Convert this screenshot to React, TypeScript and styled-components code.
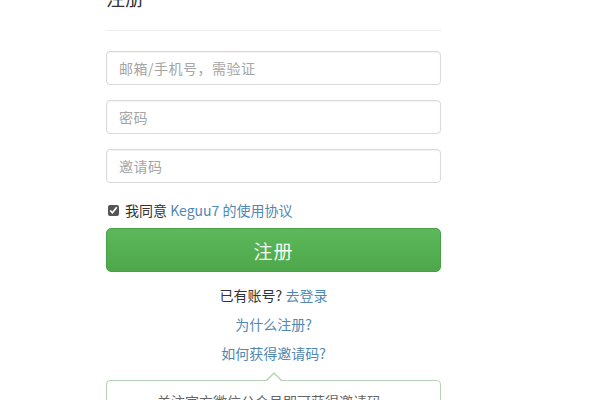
import React from 'react';
import styled, { createGlobalStyle } from 'styled-components';

const GlobalStyle = createGlobalStyle`
  html, body {
    margin: 0;
    padding: 0;
    background: #fff;
    overflow: hidden;
  }
  body {
    font-family: "Noto Sans CJK SC", "Liberation Sans", sans-serif;
    color: #333;
  }
`;

const Page = styled.div`
  width: 335px;
  height: 400px;
  padding-left: 106px;
  overflow: hidden;
`;

const Header = styled.div`
  padding-bottom: 20px;
  border-bottom: 1px solid #eee;
`;

const Title = styled.h2`
  margin: -14px 0 0;
  font-size: 19px;
  line-height: 24px;
  font-weight: normal;
  color: #333;
`;

const Form = styled.form`
  display: flex;
  flex-direction: column;
  margin-top: 20px;
`;

const Input = styled.input`
  box-sizing: border-box;
  height: 34px;
  margin-bottom: 15px;
  padding: 0 12px;
  border: 1px solid #d9d9d9;
  border-radius: 4px;
  box-shadow: inset 0 1px 1px rgba(0, 0, 0, 0.05);
  font-family: inherit;
  font-size: 14px;
  letter-spacing: 0.5px;
  color: #333;
  outline: none;
  &::placeholder {
    color: #a5a5a5;
  }
`;

const Agree = styled.label`
  display: flex;
  align-items: center;
  gap: 6px;
  height: 20px;
  margin-top: 2px;
  font-size: 14px;
  color: #333;
`;

const Check = styled.input`
  width: 11px;
  height: 11px;
  margin: 0 0 0 2px;
  accent-color: #555;
`;

const Link = styled.a`
  color: #4f88b2;
  text-decoration: none;
`;

const SubmitButton = styled.button`
  height: 44px;
  margin-top: 8px;
  border: 1px solid #48a046;
  border-radius: 5px;
  background: linear-gradient(to bottom, #5cb85a 0%, #4ea84b 100%);
  color: #f2fbf0;
  font-family: inherit;
  font-size: 19px;
  letter-spacing: 1px;
  cursor: pointer;
`;

const Links = styled.div`
  display: flex;
  flex-direction: column;
  align-items: center;
  margin-top: 9px;
`;

const Line = styled.div`
  line-height: 29px;
  font-size: 14px;
  color: #333;
`;

const Tip = styled.div`
  position: relative;
  box-sizing: border-box;
  height: 80px;
  margin-top: 12px;
  padding: 10px 0 0 50px;
  border: 1px solid #b8d2b6;
  border-radius: 4px;
  font-size: 14px;
  color: #666;

  &::before,
  &::after {
    content: '';
    position: absolute;
    left: 50%;
    width: 0;
    height: 0;
    border-style: solid;
    transform: translateX(-50%);
  }
  &::before {
    top: -9px;
    border-width: 0 8px 8px 8px;
    border-color: transparent transparent #b8d2b6 transparent;
  }
  &::after {
    top: -7px;
    border-width: 0 7px 7px 7px;
    border-color: transparent transparent #fff transparent;
  }
`;

export default function App() {
  return (
    <>
      <GlobalStyle />
      <Page>
        <Header>
          <Title>注册</Title>
        </Header>
        <Form onSubmit={(e) => e.preventDefault()}>
          <Input type="text" placeholder="邮箱/手机号，需验证" />
          <Input type="password" placeholder="密码" />
          <Input type="text" placeholder="邀请码" />
          <Agree>
            <Check type="checkbox" defaultChecked />
            <span>
              我同意 <Link href="#">Keguu7 的使用协议</Link>
            </span>
          </Agree>
          <SubmitButton type="submit">注册</SubmitButton>
        </Form>
        <Links>
          <Line>
            已有账号? <Link href="#">去登录</Link>
          </Line>
          <Line>
            <Link href="#">为什么注册?</Link>
          </Line>
          <Line>
            <Link href="#">如何获得邀请码?</Link>
          </Line>
        </Links>
        <Tip>关注官方微信公众号即可获得邀请码</Tip>
      </Page>
    </>
  );
}
